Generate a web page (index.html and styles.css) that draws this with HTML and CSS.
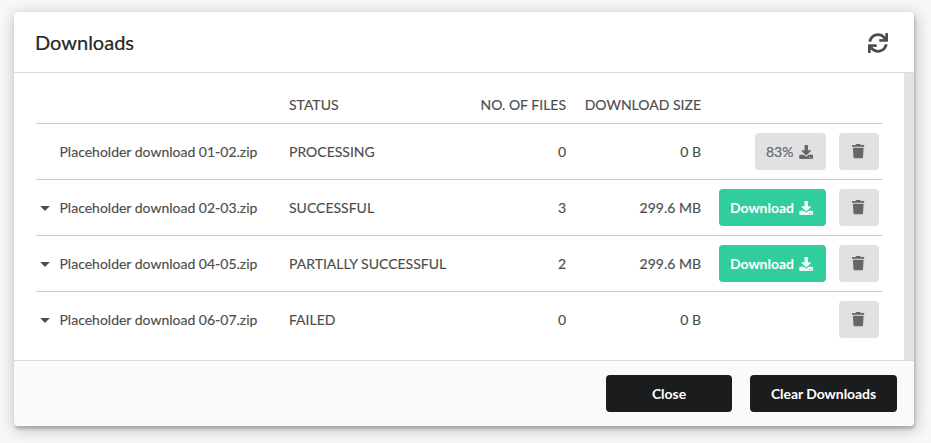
FILE: index.html
```html
<!DOCTYPE html>
<html lang="en">
<head>
<meta charset="utf-8">
<title>Downloads</title>
<link rel="stylesheet" href="styles.css">
</head>
<body>
<svg class="sprite" aria-hidden="true">
  <symbol id="refresh" viewBox="0 0 512 512"><path d="M440.65 12.57l4 82.77A247.16 247.16 0 0 0 255.83 8C134.73 8 33.91 94.92 12.29 209.82A12 12 0 0 0 24.09 224h49.05a12 12 0 0 0 11.67-9.26 175.91 175.91 0 0 1 317-56.94l-101.46-4.86a12 12 0 0 0-12.57 12v47.41a12 12 0 0 0 12 12H500a12 12 0 0 0 12-12V12a12 12 0 0 0-12-12h-47.37a12 12 0 0 0-11.98 12.57zM255.83 432a175.61 175.61 0 0 1-146-77.8l101.8 4.87a12 12 0 0 0 12.57-12v-47.4a12 12 0 0 0-12-12H12a12 12 0 0 0-12 12V500a12 12 0 0 0 12 12h47.35a12 12 0 0 0 12-12.6l-4.15-82.57A247.17 247.17 0 0 0 255.83 504c121.11 0 221.93-86.92 243.55-201.82a12 12 0 0 0-11.8-14.18h-49.05a12 12 0 0 0-11.67 9.26A175.86 175.86 0 0 1 255.83 432z"/></symbol>
  <symbol id="download" viewBox="0 0 512 512"><path d="M216 0h80c13.3 0 24 10.7 24 24v168h87.7c17.8 0 26.7 21.5 14.1 34.1L269.7 378.3c-7.5 7.5-19.8 7.5-27.3 0L90.1 226.1c-12.6-12.6-3.7-34.1 14.1-34.1H192V24c0-13.3 10.7-24 24-24zm296 376v112c0 13.3-10.7 24-24 24H24c-13.3 0-24-10.7-24-24V376c0-13.3 10.7-24 24-24h146.7l49 49c20.1 20.1 52.5 20.1 72.6 0l49-49H488c13.3 0 24 10.7 24 24zm-124 88c0-11-9-20-20-20s-20 9-20 20 9 20 20 20 20-9 20-20zm64 0c0-11-9-20-20-20s-20 9-20 20 9 20 20 20 20-9 20-20z"/></symbol>
  <symbol id="trash" viewBox="0 0 448 512"><path d="M432 32H312l-9.4-18.7A24 24 0 0 0 289.1 0H158.8a23.72 23.72 0 0 0-21.4 13.3L128 32H16A16 16 0 0 0 0 48v32a16 16 0 0 0 16 16h416a16 16 0 0 0 16-16V48a16 16 0 0 0-16-16zM53.2 467a48 48 0 0 0 47.9 45h245.8a48 48 0 0 0 47.9-45L416 128H32z"/></symbol>
  <symbol id="caret" viewBox="0 0 10 5"><path d="M.9 0h8.2q.8 0 .3.6L5.5 4.6q-.5.5-1 0L.6.6Q.1 0 .9 0z"/></symbol>
</svg>
<main class="modal">
  <header class="modal-header">
    <h1 class="title">Downloads</h1>
    <svg class="refresh-icon"><use href="#refresh"/></svg>
  </header>
  <section class="modal-content">
    <div class="table">
      <div class="row head">
        <span></span><span></span><span>STATUS</span><span class="num">NO. OF FILES</span><span class="num">DOWNLOAD SIZE</span><span></span><span></span>
      </div>
      <div class="row">
        <span></span><span>Placeholder download 01-02.zip</span><span>PROCESSING</span><span class="num">0</span><span class="num">0 B</span>
        <button class="btn muted action progress">83%<svg class="icon"><use href="#download"/></svg></button>
        <button class="btn muted delete" aria-label="Delete"><svg class="icon trash"><use href="#trash"/></svg></button>
      </div>
      <div class="row">
        <svg class="caret"><use href="#caret"/></svg><span>Placeholder download 02-03.zip</span><span>SUCCESSFUL</span><span class="num">3</span><span class="num">299.6 MB</span>
        <button class="btn green action">Download<svg class="icon"><use href="#download"/></svg></button>
        <button class="btn muted delete" aria-label="Delete"><svg class="icon trash"><use href="#trash"/></svg></button>
      </div>
      <div class="row">
        <svg class="caret"><use href="#caret"/></svg><span>Placeholder download 04-05.zip</span><span>PARTIALLY SUCCESSFUL</span><span class="num">2</span><span class="num">299.6 MB</span>
        <button class="btn green action">Download<svg class="icon"><use href="#download"/></svg></button>
        <button class="btn muted delete" aria-label="Delete"><svg class="icon trash"><use href="#trash"/></svg></button>
      </div>
      <div class="row">
        <svg class="caret"><use href="#caret"/></svg><span>Placeholder download 06-07.zip</span><span>FAILED</span><span class="num">0</span><span class="num">0 B</span>
        <span></span>
        <button class="btn muted delete" aria-label="Delete"><svg class="icon trash"><use href="#trash"/></svg></button>
      </div>
    </div>
    <div class="scroll-track"></div>
  </section>
  <footer class="modal-footer">
    <button class="btn dark close">Close</button>
    <button class="btn dark clear">Clear Downloads</button>
  </footer>
</main>
</body>
</html>
```
FILE: styles.css
```css
* { box-sizing: border-box; }
body {
  margin: 0;
  padding: 12px 17px 17px 14px;
  height: 443px;
  overflow: hidden;
  background: #f8f8f8;
  font: 14px/20px Lato, sans-serif;
  color: #4d4d4d;
}
.sprite { display: none; }
svg { fill: currentColor; display: block; }
.modal {
  display: flex;
  flex-direction: column;
  width: 900px;
  height: 414px;
  background: #fff;
  border-radius: 4px;
  overflow: hidden;
  box-shadow: 1px 3px 3px 0 rgba(0, 0, 0, .2), 1px 3px 15px 2px rgba(0, 0, 0, .2);
}
.modal-header {
  display: flex;
  align-items: center;
  justify-content: space-between;
  height: 61px;
  padding: 0 26.5px 0 21px;
  border-bottom: 1px solid #dcdcdc;
}
.title {
  margin: 0;
  font-size: 20px;
  line-height: 26px;
  font-weight: 400;
  color: #262626;
  -webkit-text-stroke: .2px currentColor;
}
.refresh-icon { width: 20px; height: 20px; margin-top: 1px; }
.modal-content { display: flex; flex: 1; justify-content: space-between; }
.scroll-track { width: 10px; background: #e3e3e3; }
.table { width: 846px; margin: 14px 0 0 22px; }
.row {
  display: grid;
  grid-template-columns: 23.5px 229.5px 160px 117px 135px 125px 53px;
  align-items: center;
  height: 56px;
  border-top: 1px solid #c8c8c9;
  -webkit-text-stroke: .15px currentColor;
}
.head { height: 36px; border-top: 0; }
.num { text-align: right; }
.caret { width: 10px; height: 5px; margin: 1px 0 0 3.5px; }
.btn {
  display: flex;
  align-items: center;
  justify-content: center;
  height: 37px;
  padding: 0;
  border: 0;
  border-radius: 4px;
  font: inherit;
  -webkit-text-stroke: 0;
}
.action { justify-self: end; width: 107px; padding-left: 11px; padding-right: 13px; justify-content: space-between; }
.progress { width: 71px; -webkit-text-stroke: .15px currentColor; }
.delete { justify-self: end; width: 40px; padding-right: 1px; }
.muted { background: #e0e1e2; color: #666; }
.green { background: #32cd9c; color: #fff; font-weight: 700; letter-spacing: -.04px; }
.icon { width: 14.5px; height: 14px; }
.green .icon { opacity: .9; }
.trash { width: 12.5px; height: 14.5px; }
.modal-footer {
  display: flex;
  justify-content: flex-end;
  gap: 18px;
  height: 66px;
  padding: 14px 17px 0;
  background: #f9fafb;
  border-top: 1px solid #d9dadb;
}
.dark { background: #1b1c1d; color: #fff; font-weight: 700; letter-spacing: -.05px; }
.close { width: 126px; }
.clear { width: 147px; }
```
